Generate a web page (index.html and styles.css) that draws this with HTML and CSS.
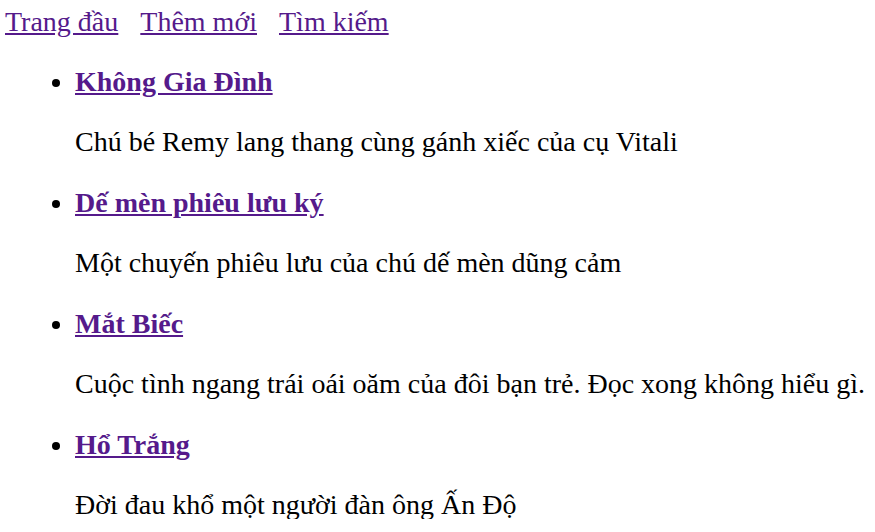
FILE: index.html
```html
<!DOCTYPE html>
<html lang="vi">
<head>
<meta charset="utf-8">
<title>Sách</title>
<link rel="stylesheet" href="styles.css">
</head>
<body>
<nav class="nav">
  <a href="#">Trang đầu</a>
  <a href="#">Thêm mới</a>
  <a href="#">Tìm kiếm</a>
</nav>
<ul class="books">
  <li>
    <h3 class="title"><a href="#">Không Gia Đình</a></h3>
    <p class="desc">Chú bé Remy lang thang cùng gánh xiếc của cụ Vitali</p>
  </li>
  <li>
    <h3 class="title"><a href="#">Dế mèn phiêu lưu ký</a></h3>
    <p class="desc">Một chuyến phiêu lưu của chú dế mèn dũng cảm</p>
  </li>
  <li>
    <h3 class="title"><a href="#">Mắt Biếc</a></h3>
    <p class="desc">Cuộc tình ngang trái oái oăm của đôi bạn trẻ. Đọc xong không hiểu gì.</p>
  </li>
  <li>
    <h3 class="title"><a href="#">Hổ Trắng</a></h3>
    <p class="desc">Đời đau khổ một người đàn ông Ấn Độ</p>
  </li>
</ul>
</body>
</html>
```

FILE: styles.css
```css
html, body {
  margin: 0;
  background: #fff;
}
body {
  padding: 6px 5px 0;
  font-family: "Liberation Serif", "Times New Roman", serif;
  font-size: 28px;
  color: #000;
}
a {
  color: #551a8b;
  text-decoration: underline;
}
.nav {
  display: flex;
  gap: 22px;
  line-height: 28px;
  padding-top: 2px;
  margin-bottom: -1px;
}
.books {
  margin: 0;
  padding: 0 0 0 70px;
  list-style: disc;
}
.title {
  font-size: 28px;
  font-weight: bold;
  line-height: 30px;
  margin: 31px 0;
}
.desc {
  margin: 31px 0;
  line-height: 28px;
}
.books li:last-child .desc {
  margin-bottom: 0;
}
```
